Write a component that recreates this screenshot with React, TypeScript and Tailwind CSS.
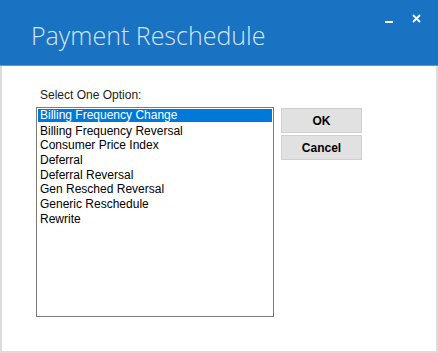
import React from "react";

const items = [
  "Billing Frequency Change",
  "Billing Frequency Reversal",
  "Consumer Price Index",
  "Deferral",
  "Deferral Reversal",
  "Gen Resched Reversal",
  "Generic Reschedule",
  "Rewrite",
];

export default function App() {
  return (
    <div className="w-[438px] h-[353px] flex flex-col bg-white" style={{ fontFamily: '"Liberation Sans", Arial, sans-serif' }}>
      <div className="h-[66px] bg-[#1a72c2] relative shrink-0 border-b border-[#5b9bd5]">
        <div
          className="absolute left-[31px] top-[18px] text-[25px] font-light text-[#d3e5f6] leading-[34px]"
          style={{ fontFamily: '"Open Sans", sans-serif' }}
        >
          Payment Reschedule
        </div>
        <div className="absolute left-[385px] top-[21px] w-[8px] h-[2px] bg-white" />
        <svg className="absolute left-[412px] top-[14px]" width="9" height="9" viewBox="0 0 9 9">
          <path d="M1 1L8 8M8 1L1 8" stroke="white" strokeWidth="1.8" />
        </svg>
      </div>
      <div className="flex-1 border-x-2 border-b-2 border-[#dcdcdc] pl-[34px] pt-[22px]">
        <div className="text-[12px] leading-[14px] text-[#222] pl-[4px]">Select One Option:</div>
        <div className="flex gap-[7px] mt-[5px]">
          <div className="w-[238px] h-[210px] border border-[#7a7a7a] bg-white pt-[1px] px-[1px]">
            {items.map((t, i) => (
              <div key={t} className="h-[14.7px] text-[12px] whitespace-nowrap text-black">
                {i === 0 ? (
                  <div className="h-[13px] leading-[13px] pl-[2px] bg-[#0078d7] text-white">{t}</div>
                ) : (
                  <div className="leading-[14.7px] pl-[2px]">{t}</div>
                )}
              </div>
            ))}
          </div>
          <div className="flex flex-col gap-[2px] pt-[1px]">
            <button className="w-[81px] h-[25px] bg-[#e1e1e1] border border-[#d0d0d0] text-[12px] font-bold text-black">
              OK
            </button>
            <button className="w-[81px] h-[25px] bg-[#e1e1e1] border border-[#d0d0d0] text-[12px] font-bold text-black">
              Cancel
            </button>
          </div>
        </div>
      </div>
    </div>
  );
}
